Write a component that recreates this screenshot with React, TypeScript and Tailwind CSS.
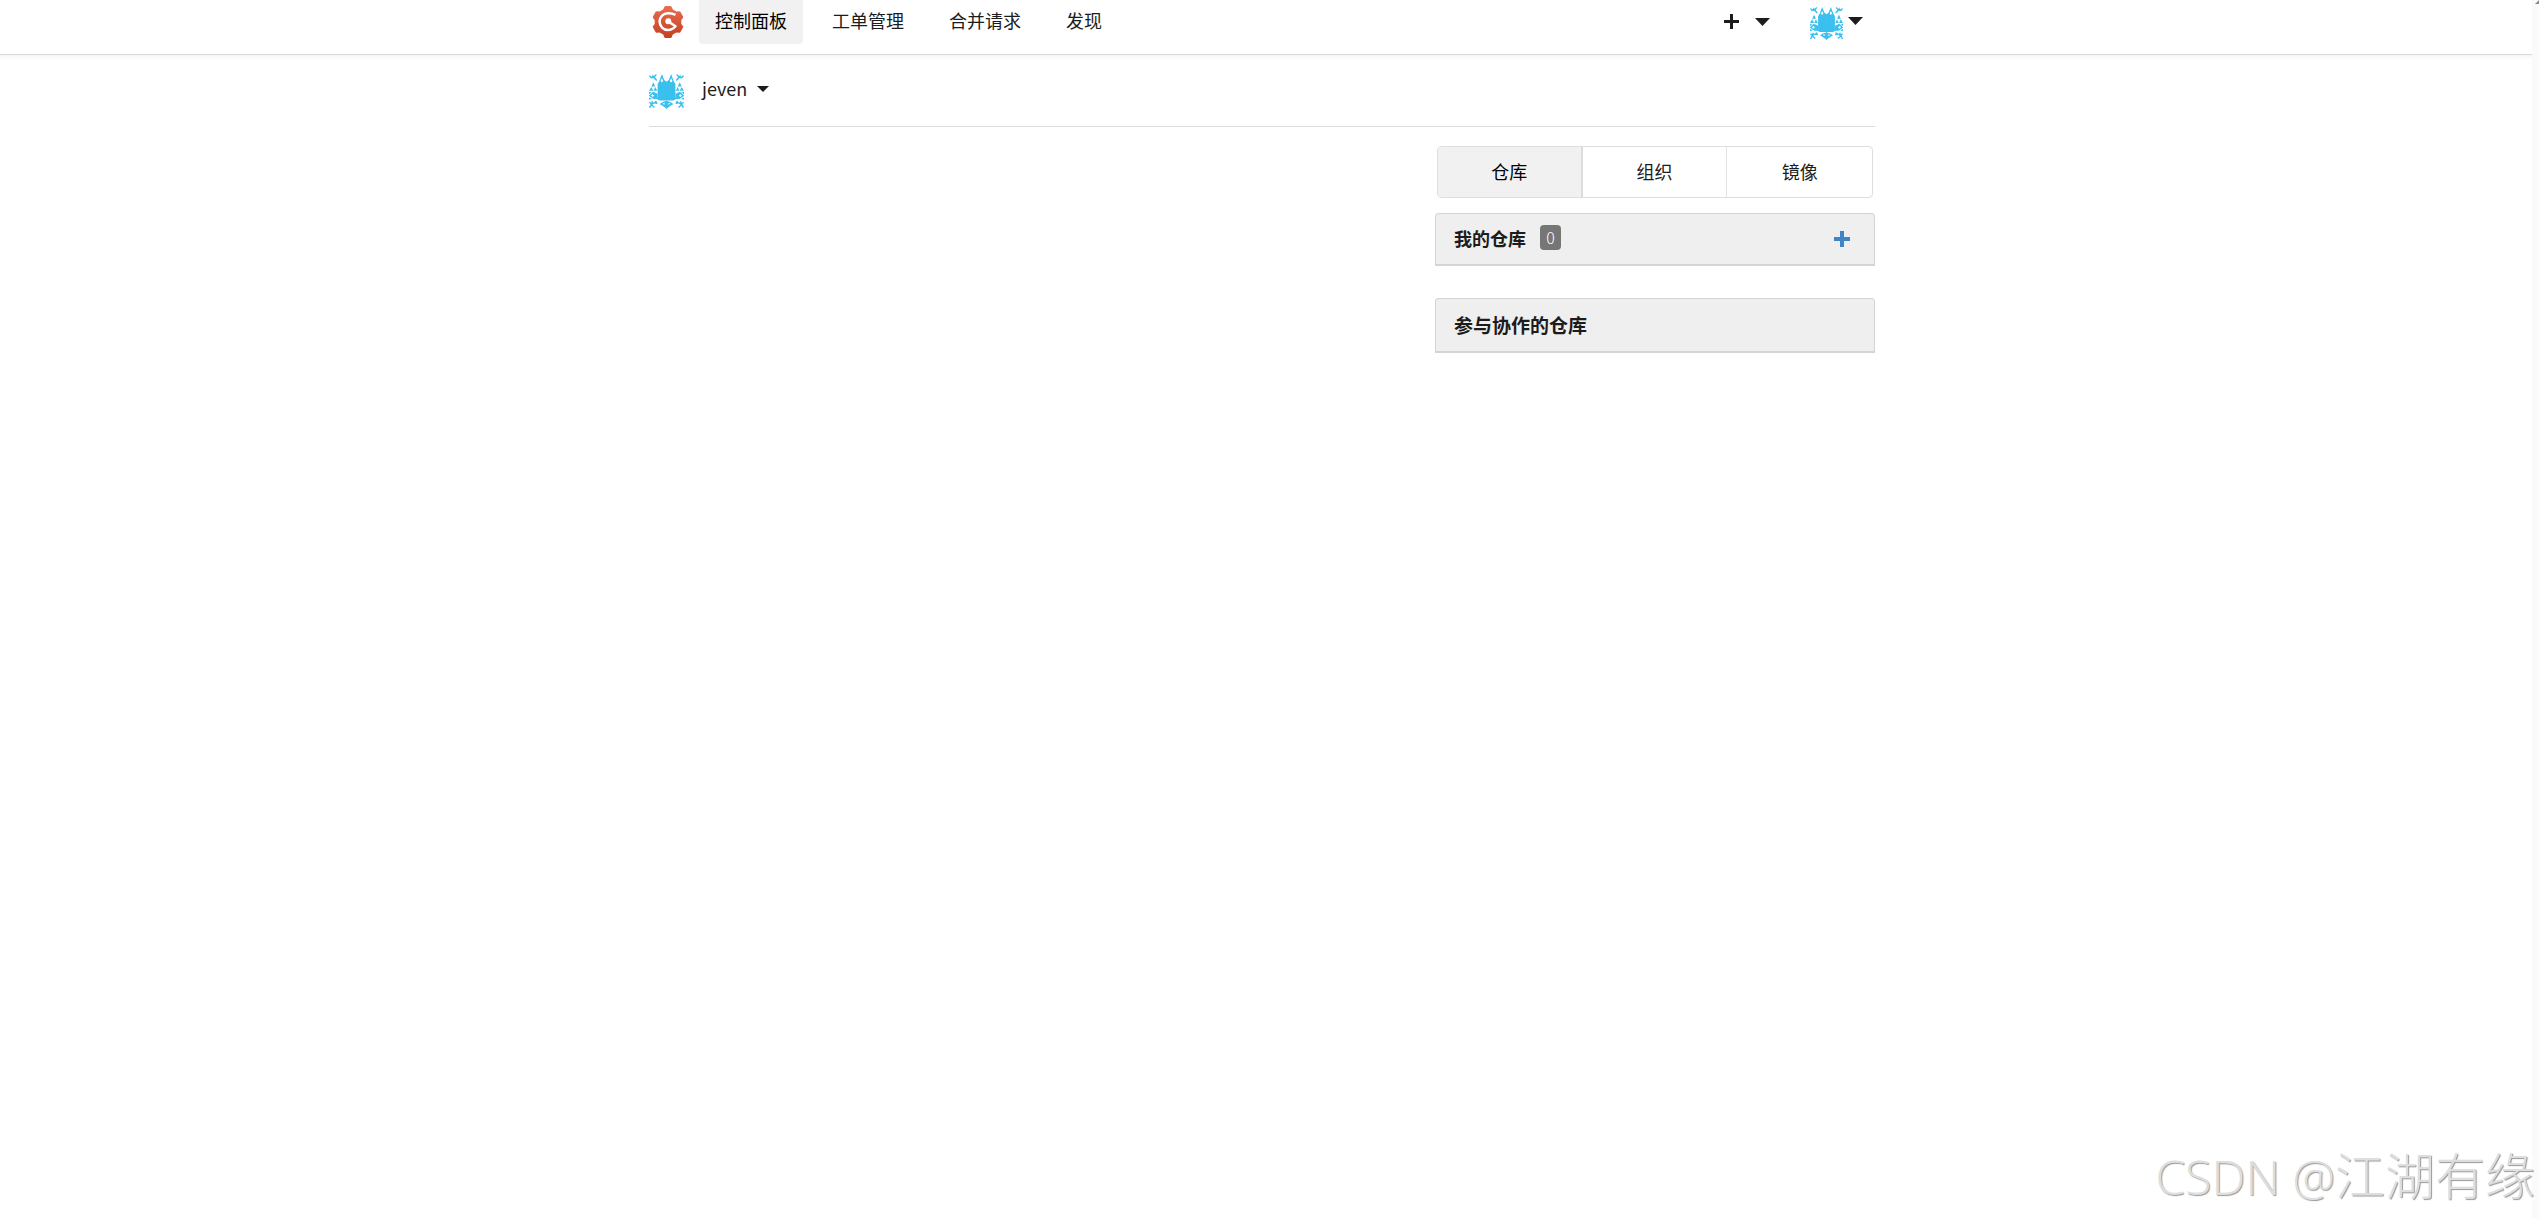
import React from "react";

const Caret = ({ className }: { className: string }) => (
  <svg viewBox="0 0 16 8" preserveAspectRatio="none" className={className} aria-hidden="true">
    <path d="M0 0H16L8 8Z" fill="currentColor" />
  </svg>
);

const Logo = () => (
  <svg viewBox="0 0 32 34" className="h-[34px] w-8" role="img" aria-label="Gogs">
    <defs>
      <linearGradient id="gear" x1="0" y1="0" x2="0" y2="1">
        <stop offset="0" stopColor="#ea6e52" />
        <stop offset="1" stopColor="#c2401f" />
      </linearGradient>
    </defs>
    <path
      d="M13.500 1h5q1 0 1.500 1.500l.8 2 3.700 2 2.500-.2q1.200 0 1.700 1l2.300 4.200q.5 1-.3 1.800L29.300 15v4l1.400 1.700q.8.800.3 1.800l-2.300 4.200q-.5 1-1.700 1l-2.500-.2-3.700 2-.8 2Q19.500 33 18.500 33h-5q-1 0-1.500-1.500l-.8-2-3.700-2-2.500.2q-1.200 0-1.700-1L1 22.500q-.5-1 .3-1.800L2.700 19v-4l-1.400-1.700Q.5 12.500 1 11.500l2.300-4.200q.5-1 1.700-1l2.500.2 3.700-2 .8-2Q12.500 1 13.500 1Z"
      fill="url(#gear)"
    />
    <path d="M23.500 9.800Q20.500 8.200 16 8.200A8.300 8.300 0 0 0 16 25Q20.500 25 23.500 21.300L17 17" fill="none" stroke="#fff" strokeWidth="2.500" strokeLinejoin="round" />
    <circle cx="16.300" cy="16.300" r="3" fill="#fff" />
  </svg>
);

const AvatarHalf = () => (
  <g>
    <path d="M26 78V30L31 22L39 0L46 18L54 24V78Z" />
    <path d="M9 1L15 6L20 1L24 2L18 10L25 18L22 21L13 12L9 14L4 12L0 5L3 4L8 8L11 6Z" />
    <path d="M13 25L19 38H7ZM7 39L13 51H0ZM19 39L25 51H14Z" />
    <path d="M0 65L12 54L26 60V76H14L0 67Z" />
    <path d="M0 54L8 56L0 61ZM0 71L9 75L0 78Z" />
    <path d="M9 81L15 87L20 81L24 83L26 90L23 91L16 89L10 93L18 99L15 103L8 96L3 104L0 101L5 91L0 88L2 84L7 87Z" />
    <path d="M54 81L43 84L32 91L42 97L54 106Z" />
    <path d="M20 72H54V80H32Z" />
    <g fill="#fff">
      <path d="M39 13L43 21L39 26L35 21Z" />
      <path d="M6 65L11 61L16 65L11 70Z" />
      <path d="M41 90L47 87V93Z" />
    </g>
  </g>
);

const Avatar = ({ className }: { className: string }) => (
  <svg viewBox="0 0 106 106" className={className} role="img" aria-label="jeven">
    <g fill="#39c0ef">
      <AvatarHalf />
      <g transform="translate(106 0) scale(-1 1)">
        <AvatarHalf />
      </g>
    </g>
  </svg>
);

const links = ["工单管理", "合并请求", "发现"];

export default function App() {
  return (
    <div className="relative min-h-screen overflow-hidden bg-white pr-[7px] font-['Noto_Sans_CJK_SC',sans-serif] text-lg leading-6 font-normal text-[#1c1c1c]">
      <header className="border-b border-[#d8d8d8] pr-2 shadow-[0_2px_4px_rgba(0,0,0,0.05)]">
        <nav className="mx-auto flex h-[54px] max-w-[1226px] items-start">
          <a href="#home" className="mt-[5px] ml-[3px]">
            <Logo />
          </a>
          <a href="#dashboard" className="ml-[15px] rounded-b bg-[#f1f1f1] px-4 pt-2 pb-3 text-black">
            控制面板
          </a>
          {links.map((l) => (
            <a key={l} href="#link" className="ml-[13px] px-4 pt-2 pb-3">
              {l}
            </a>
          ))}
          <button type="button" aria-label="创建" className="mt-3.5 ml-auto flex items-center gap-4">
            <svg viewBox="0 0 15 15" className="size-[15px]" aria-hidden="true">
              <path d="M6 0h3v6h6v3H9v6H6V9H0V6h6z" fill="currentColor" />
            </svg>
            <Caret className="h-2 w-[15px]" />
          </button>
          <button type="button" aria-label="用户菜单" className="mt-[7px] mr-3 ml-10 flex gap-[5px]">
            <Avatar className="size-[33px]" />
            <Caret className="mt-2.5 h-2 w-[15px]" />
          </button>
        </nav>
      </header>

      <main className="pr-2">
        <div className="mx-auto max-w-[1226px]">
          <div className="flex h-[72px] items-start border-b border-[#dcdcdc] pt-[19px]">
            <Avatar className="size-[35px]" />
            <button type="button" className="mt-0.5 ml-[18px] flex items-center gap-2.5">
              jeven
              <Caret className="mt-0.5 h-1.5 w-3" />
            </button>
          </div>

          <aside className="mt-[19px] ml-auto w-[440px]">
            <div className="mx-0.5 grid h-[52px] grid-cols-3 overflow-hidden rounded border border-[#dededf]">
              <button type="button" className="border-r-2 border-[#dcdcdc] bg-[#f1f1f1] pb-0.5 text-black">仓库</button>
              <button type="button" className="border-r border-[#e4e4e4] pb-0.5">组织</button>
              <button type="button" className="pb-0.5">镜像</button>
            </div>

            <section className="mt-[15px] flex h-[53px] items-center rounded-t border border-b-2 border-[#d4d4d5] bg-[#efefef] pr-6 pl-[18px]">
              <h4 className="pb-0.5 font-bold">我的仓库</h4>
              <span className="mb-1 ml-3.5 flex h-[25px] w-[21px] items-center justify-center rounded bg-[#767676] text-base font-light text-white">
                0
              </span>
              <a href="#new" aria-label="创建新的仓库" className="ml-auto text-[#4183c4]">
                <svg viewBox="0 0 16 16" className="size-4" aria-hidden="true">
                  <path d="M6 0h4v6h6v4h-6v6H6v-6H0V6h6z" fill="currentColor" />
                </svg>
              </a>
            </section>

            <section className="mt-8 flex h-[55px] items-center rounded-t border border-b-2 border-[#d4d4d5] bg-[#efefef] px-[18px]">
              <h4 className="text-[19px] font-bold">参与协作的仓库</h4>
            </section>
          </aside>
        </div>
      </main>

      <div className="absolute inset-y-0 right-0 w-[7px] bg-[#fafafa]">
        <svg viewBox="0 0 4 4" className="ml-auto size-1" aria-hidden="true">
          <path d="M4 0V4H0Z" fill="#8a8a8a" />
        </svg>
      </div>

      <p className="absolute right-1 bottom-4 flex items-baseline whitespace-nowrap font-light text-[#dedede] [text-shadow:1px_1px_1px_#999]">
        <span className="font-['Open_Sans',sans-serif] text-5xl">CSDN @</span>
        <span className="text-[50px] leading-[60px]">江湖有缘</span>
      </p>
    </div>
  );
}
